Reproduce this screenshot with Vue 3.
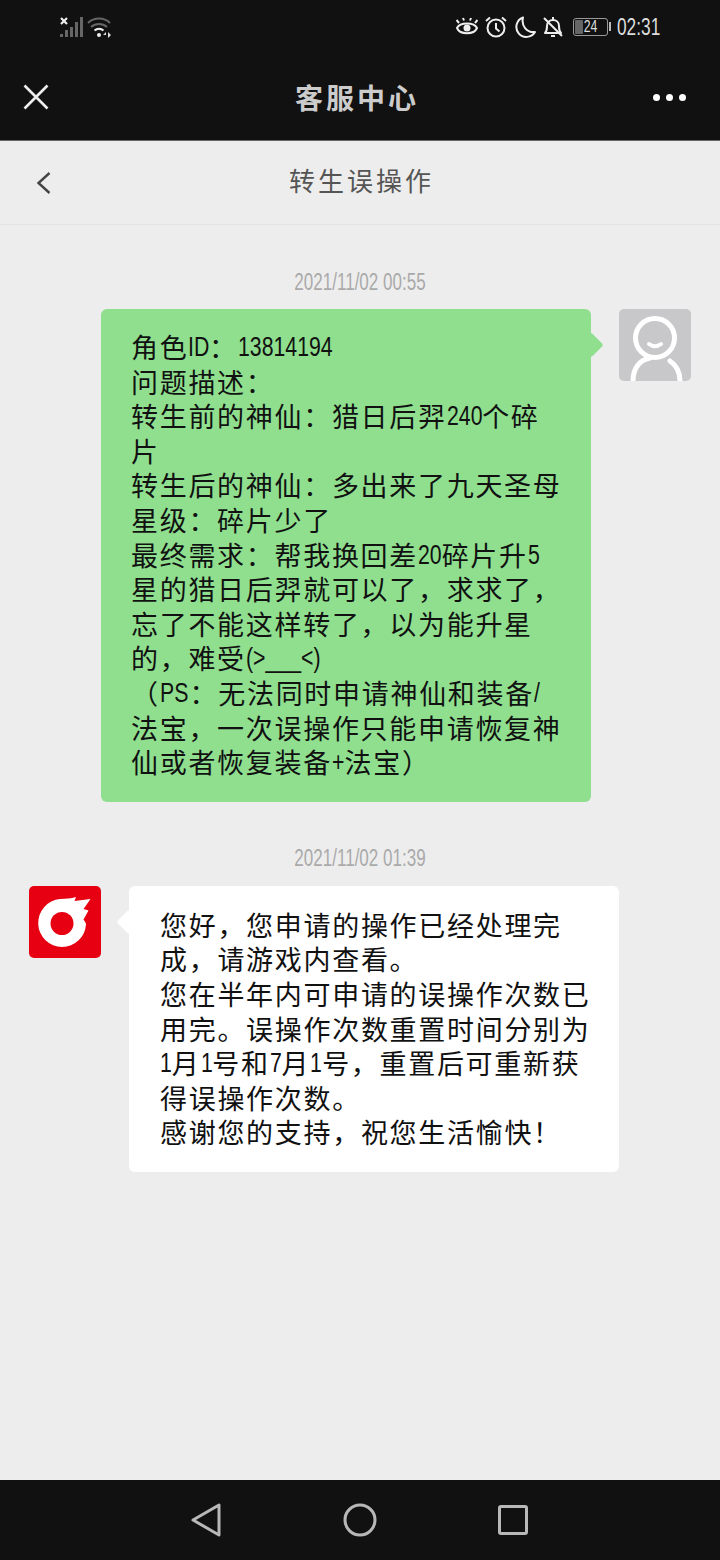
<template>
  <div class="page">
    <div class="top">
      <div class="status">
        <div class="status-left">
          <svg width="23" height="22" viewBox="0 0 23 22">
            <path d="M1 2l6 6M7 2l-6 6" stroke="#eee" stroke-width="2.200" fill="none" />
            <path d="M0 18h3v3H0zM5 14h3v7H5zM10 11h3v10h-3zM15 6h3v15h-3zM20 1h3v20h-3z" fill="#666" />
          </svg>
          <svg width="25" height="22" viewBox="0 0 25 22">
            <path d="M1 7a16 16 0 0 1 22 0" stroke="#666" stroke-width="2" fill="none" />
            <path d="M4 11a12 12 0 0 1 16 0" stroke="#666" stroke-width="2" fill="none" />
            <path d="M7.500 14.500a7 7 0 0 1 9 0" stroke="#eee" stroke-width="2" fill="none" />
            <circle cx="12" cy="19" r="2" fill="#eee" />
            <path d="M19 19l-3 0 3-3zM19 16v6M21 16v6l3-3z" fill="#ddd" />
          </svg>
        </div>
        <div class="status-right">
          <svg width="22" height="20" viewBox="1 0 22 20">
            <path d="M2 11c3-6 17-6 20 0-3 7-17 7-20 0z" fill="none" stroke="#eee" stroke-width="2" />
            <circle cx="12" cy="11" r="3.500" fill="#eee" />
            <path d="M4 6L1.500 3M9 3.500L8 1M15 3.500L16 1M20 6l2.500-3" stroke="#eee" stroke-width="2" />
          </svg>
          <svg width="22" height="22" viewBox="0 0 22 22">
            <circle cx="11" cy="12" r="8.500" fill="none" stroke="#eee" stroke-width="2" />
            <path d="M11 7v5.500l3.500 3M1 5l4-3.500M21 5l-4-3.500" fill="none" stroke="#eee" stroke-width="2" />
          </svg>
          <svg width="22" height="22" viewBox="0 0 22 22">
            <path d="M9 1.500a10 10 0 1 0 12 14.500C13 17 7 10 9 1.500z" fill="none" stroke="#eee" stroke-width="2" stroke-linejoin="round" />
          </svg>
          <svg width="20" height="22" viewBox="0 0 20 22">
            <path d="M2 17c2-2 2-4 2-7 0-4 3-6 6-6s6 2 6 6c0 3 0 5 2 7z" fill="none" stroke="#eee" stroke-width="2" stroke-linejoin="round" />
            <path d="M10 1v3M8 20h4M1 2l18 18" stroke="#eee" stroke-width="2" />
          </svg>
          <div class="battery">
            <span class="battery-level"></span>
            <span class="battery-num">24</span>
            <span class="battery-cap"></span>
          </div>
          <span class="clock">02:31</span>
        </div>
      </div>
      <div class="header">
        <svg class="close" width="26" height="26" viewBox="0 0 26 26">
          <path d="M1.500 1.500l23 23M24.500 1.500l-23 23" stroke="#eee" stroke-width="2.600" fill="none" />
        </svg>
        <div class="header-title">客服中心</div>
        <div class="dots"><i></i><i></i><i></i></div>
      </div>
    </div>

    <div class="subnav">
      <svg class="back" width="16" height="24" viewBox="0 0 16 24">
        <path d="M13.500 2L2.500 12l11 10" stroke="#444" stroke-width="2.400" fill="none" />
      </svg>
      <div class="subnav-title">转生误操作</div>
    </div>

    <div class="chat">
      <div class="time first">2021/11/02 00:55</div>
      <div class="row mine">
        <div class="bubble green">
          <div v-for="(line, i) in question" :key="i" class="line">
            <template v-for="(part, j) in split(line)" :key="j">
              <span v-if="j % 2" class="num" :style="{ marginRight: squeeze(part) }">{{ part }}</span>
              <template v-else>{{ part }}</template>
            </template>
          </div>
        </div>
        <div class="avatar user">
          <svg width="72" height="72" viewBox="0 0 72 72">
            <circle cx="36" cy="29" r="19.500" fill="none" stroke="#fff" stroke-width="5" />
            <path d="M30 35c4 3 8 3 12 0" fill="none" stroke="#fff" stroke-width="4" stroke-linecap="round" />
            <path d="M14 72c0-12 6-21 17-23M51 52c6 4 10 11 10 20" fill="none" stroke="#fff" stroke-width="5" stroke-linecap="round" />
          </svg>
        </div>
      </div>

      <div class="time">2021/11/02 01:39</div>
      <div class="row">
        <div class="avatar logo">
          <svg width="72" height="72" viewBox="0 0 72 72">
            <path d="M33 61A24 24 0 0 1 31 13.100C37 12.500 42 12.500 47 11L45.500 15 61.500 13 54.500 23 59.500 24.500 54.500 33.500C56.500 36 57 38 57 38A24 24 0 0 1 33 61z" fill="#fff" />
            <circle cx="33" cy="37.500" r="11.500" fill="#e60012" />
          </svg>
        </div>
        <div class="bubble white">
          <div v-for="(line, i) in answer" :key="i" class="line">
            <template v-for="(part, j) in split(line)" :key="j">
              <span v-if="j % 2" class="num" :style="{ marginRight: squeeze(part) }">{{ part }}</span>
              <template v-else>{{ part }}</template>
            </template>
          </div>
        </div>
      </div>
    </div>

    <div class="navbar">
      <svg width="32" height="36" viewBox="0 0 32 36">
        <path d="M3 18L29 3v30z" fill="none" stroke="#b8b8b8" stroke-width="3" stroke-linejoin="round" />
      </svg>
      <svg width="34" height="34" viewBox="0 0 34 34">
        <circle cx="17" cy="17" r="15" fill="none" stroke="#b8b8b8" stroke-width="3" />
      </svg>
      <svg class="nav-square" width="30" height="30" viewBox="0 0 30 30">
        <rect x="1.500" y="1.500" width="27" height="27" rx="1.500" fill="none" stroke="#b8b8b8" stroke-width="3" />
      </svg>
    </div>
  </div>
</template>

<script setup>
const question = [
  '角色ID：13814194',
  '问题描述：',
  '转生前的神仙：猎日后羿240个碎',
  '片',
  '转生后的神仙：多出来了九天圣母',
  '星级：碎片少了',
  '最终需求：帮我换回差20碎片升5',
  '星的猎日后羿就可以了，求求了，',
  '忘了不能这样转了，以为能升星',
  '的，难受(>___<)',
  '（PS：无法同时申请神仙和装备/',
  '法宝，一次误操作只能申请恢复神',
  '仙或者恢复装备+法宝）',
]

const answer = [
  '您好，您申请的操作已经处理完',
  '成，请游戏内查看。',
  '您在半年内可申请的误操作次数已',
  '用完。误操作次数重置时间分别为',
  '1月1号和7月1号，重置后可重新获',
  '得误操作次数。',
  '感谢您的支持，祝您生活愉快！',
]

// odd parts are latin / digits, they get the squeezed font
const split = (line) => line.split(/([\x21-\x7e]+)/)

// scaleX leaves the layout box wide, so pull the next text back
const squeeze = (part) => `${part.length * -3.75}px`
</script>

<style>
html,
body {
  margin: 0;
  background: #ededed;
}
</style>

<style scoped>
.page {
  width: 720px;
  height: 1560px;
  display: flex;
  flex-direction: column;
  background: #ededed;
  font-family: "Noto Sans CJK SC", sans-serif;
  overflow: hidden;
}

.top {
  background: #111;
  border-bottom: 1px solid #666;
}

.status {
  height: 54px;
  padding: 0 60px;
  display: flex;
  align-items: center;
  justify-content: space-between;
}

.status-left {
  display: flex;
  align-items: center;
  gap: 4px;
}

.status-right {
  display: flex;
  align-items: center;
  gap: 7px;
}

.battery {
  position: relative;
  width: 33px;
  height: 16px;
  margin-left: 3px;
  margin-right: 2px;
  border: 1px solid #999;
  border-radius: 3px;
  display: flex;
  align-items: center;
  justify-content: center;
}

.battery-level {
  position: absolute;
  left: 1px;
  top: 1px;
  bottom: 1px;
  width: 8px;
  background: #666;
  border-radius: 1px;
}

.battery-num {
  position: relative;
  color: #ddd;
  font-size: 17px;
  font-family: "Liberation Sans", sans-serif;
  transform: scaleX(0.72);
}

.battery-cap {
  position: absolute;
  right: -4px;
  top: 3px;
  width: 2px;
  height: 9px;
  background: #bbb;
}

.clock {
  width: 43px;
  color: #ddd;
  font-size: 24px;
  line-height: 24px;
  white-space: nowrap;
  font-family: "Liberation Sans", sans-serif;
  transform: scaleX(0.72);
  transform-origin: left center;
}

.header {
  height: 86px;
  padding: 0 34px 0 23px;
  display: grid;
  grid-template-columns: 1fr auto 1fr;
  align-items: center;
}

.header-title {
  margin-left: 5px;
  color: #ccc;
  font-size: 28px;
  font-weight: 700;
  letter-spacing: 3px;
}

.dots {
  justify-self: end;
  display: flex;
  gap: 6px;
}

.dots i {
  width: 7px;
  height: 7px;
  border-radius: 50%;
  background: #fff;
}

.subnav {
  height: 83px;
  padding: 0 36px;
  display: grid;
  grid-template-columns: 1fr auto 1fr;
  align-items: center;
  border-bottom: 1px solid #e3e3e3;
}

.subnav-title {
  margin-left: 3px;
  padding-bottom: 6px;
  color: #555;
  font-size: 26px;
  letter-spacing: 3px;
}

.chat {
  flex: 1;
}

.time {
  margin-top: 42px;
  margin-bottom: 14px;
  height: 28px;
  line-height: 28px;
  text-align: center;
  color: #aaa;
  font-size: 23px;
  font-family: "Liberation Sans", sans-serif;
  transform: scaleX(0.74);
}

.time.first {
  margin-top: 43px;
  margin-bottom: 13px;
}

.row {
  display: flex;
  align-items: flex-start;
  gap: 28px;
  padding: 0 29px;
}

.row.mine {
  justify-content: flex-end;
}

.avatar {
  width: 72px;
  height: 72px;
  flex: none;
  border-radius: 5px;
  overflow: hidden;
}

.avatar svg {
  display: block;
}

.avatar.user {
  background: #c8c8ca;
}

.avatar.logo {
  background: #e60012;
}

.bubble {
  position: relative;
  width: 490px;
  box-sizing: border-box;
  padding: 21px 20px 22px 30px;
  border-radius: 6px;
  color: #111;
  font-size: 27px;
  letter-spacing: 1.700px;
}

.bubble::after {
  content: "";
  position: absolute;
  top: 27px;
  width: 18px;
  height: 18px;
  border-radius: 3px;
  transform: rotate(45deg);
  background: inherit;
}

.green {
  background: #8fdf8f;
}

.green::after {
  right: -9px;
}

.white {
  padding-top: 22px;
  padding-left: 31px;
  background: #fff;
}

.white::after {
  left: -9px;
}

.line {
  height: 34.600px;
  line-height: 34.600px;
  white-space: nowrap;
}

.num {
  display: inline-block;
  height: 34.600px;
  vertical-align: top;
  font-family: "Liberation Sans", sans-serif;
  font-size: 28px;
  letter-spacing: 0;
  transform: scaleX(0.76);
  transform-origin: left center;
}

.navbar {
  height: 80px;
  padding: 0 129px;
  display: grid;
  grid-template-columns: repeat(3, 1fr);
  align-items: center;
  justify-items: center;
  background: #111;
}

.nav-square {
  margin-right: 2px;
}
</style>
